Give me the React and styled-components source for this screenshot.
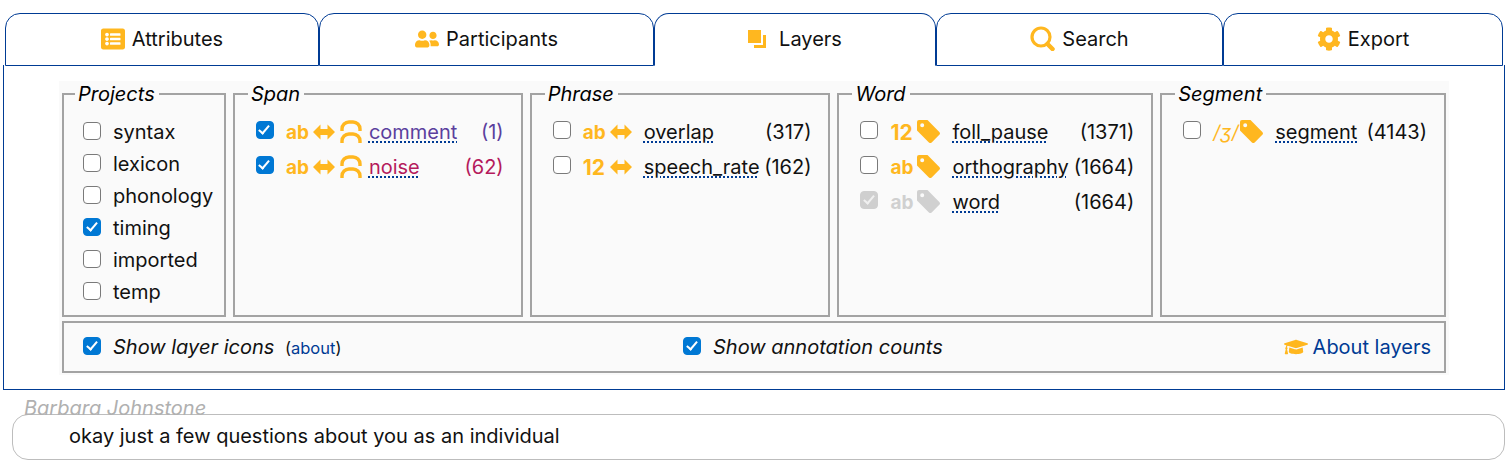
import React from "react";
import styled, { createGlobalStyle } from "styled-components";
import { FaListAlt, FaUserFriends, FaCog, FaTag, FaGraduationCap, FaArrowsAltH } from "react-icons/fa";

const AMBER = "#ffb71f";
const NAVY = "#003b94";

const Global = createGlobalStyle`
  html, body { margin: 0; padding: 0; background: #fff; }
  body { font-family: Inter, "Noto Sans", sans-serif; font-size: 20px; color: #111; }
`;

const Page = styled.div`
  width: 1510px;
  height: 470px;
  padding: 13px 5px 0 3px;
  box-sizing: border-box;
  overflow: hidden;
`;

const TabBar = styled.div`
  display: flex;
  margin-left: 2px;
  height: 53px;
`;

const Tab = styled.div`
  width: ${(p) => p.$w}px;
  box-sizing: border-box;
  border: 1px solid ${NAVY};
  border-bottom-color: ${(p) => (p.$active ? "transparent" : NAVY)};
  border-radius: 15px 15px 0 0;
  display: flex;
  align-items: center;
  justify-content: center;
  gap: 7px;
  padding-bottom: 2px;
  background: #fff;
  svg { color: ${AMBER}; flex: none; }
`;

const Panel = styled.div`
  width: 1502px;
  height: 325px;
  margin-top: -1px;
  box-sizing: border-box;
  border: 1px solid ${NAVY};
  border-top: 0;
  padding: 16px 0 0 55px;
`;

const Inner = styled.div`
  width: 1390px;
  height: 294px;
  box-sizing: border-box;
  background: #fafafa;
  padding: 1px 3px 0;
`;

const Columns = styled.div`
  display: flex;
  gap: 7px;
`;

const Group = styled.fieldset`
  width: ${(p) => p.$w}px;
  height: 235px;
  box-sizing: border-box;
  margin: 0;
  padding: 8px 17px 0 ${(p) => p.$left || 21}px;
  border: 2px solid #a3a3a3;
  min-width: 0;
`;

const Legend = styled.legend`
  font-style: italic;
  color: #000;
  padding: 0 4px 0 3px;
  margin-left: -8px;
  line-height: 24px;
`;

const ProjectRow = styled.label`
  display: flex;
  align-items: center;
  gap: 12px;
  height: 32px;
  position: relative;
  top: 2px;
`;

const Row = styled.div`
  display: flex;
  align-items: center;
  height: 35px;
`;

const Check = styled.input.attrs({ type: "checkbox", readOnly: true })`
  appearance: none;
  flex: none;
  width: 18px;
  height: 18px;
  margin: 0 0 3px;
  box-sizing: border-box;
  border: 1.5px solid #7a7a7a;
  border-radius: 4px;
  background: #fff;
  position: relative;
  &:checked { background: #0078d4; border-color: #0078d4; }
  &:checked::after {
    content: "";
    position: absolute;
    left: 4.5px;
    top: 1px;
    width: 4px;
    height: 9px;
    border: solid #fff;
    border-width: 0 2.5px 2.5px 0;
    transform: rotate(40deg);
  }
  &:disabled { background: #cfcfcf; border-color: #cfcfcf; }
  &:disabled::after { border-color: #f0f0f0; }
`;

const Icons = styled.span`
  display: flex;
  align-items: center;
  gap: 5px;
  margin-left: 12px;
  margin-right: ${(p) => (p.$tight ? 7 : 12)}px;
  color: ${(p) => (p.$off ? "#d0d0d0" : AMBER)};
  svg { flex: none; }
`;

const Glyph = styled.b`
  width: 22px;
  font-size: ${(p) => p.$size || 19}px;
  font-weight: ${(p) => p.$weight || 700};
  font-style: ${(p) => (p.$italic ? "italic" : "normal")};
  line-height: 22px;
  margin-top: 2px;
  white-space: nowrap;
`;

const Name = styled.span`
  color: ${(p) => p.$color || "#111"};
  text-decoration: underline dotted ${NAVY} 2px;
  text-underline-offset: 3px;
  line-height: 24px;
`;

const Count = styled.span`
  margin-left: auto;
  color: ${(p) => p.$color || "#111"};
`;

const Options = styled.fieldset`
  height: 52px;
  box-sizing: border-box;
  margin: 4px 0 0;
  padding: 0 13px 0 19px;
  width: 1384px;
  border: 2px solid #a3a3a3;
  display: grid;
  grid-template-columns: 600px 1fr auto;
  align-items: center;
`;

const Option = styled.label`
  display: flex;
  align-items: center;
  gap: 12px;
  font-style: italic;
`;

const About = styled.span`
  font-style: normal;
  font-size: 16.5px;
  color: ${NAVY};
  margin-left: 6px;
  span { color: #111; }
`;

const AboutLayers = styled.a`
  display: flex;
  align-items: center;
  gap: 5px;
  color: ${NAVY};
  svg { color: ${AMBER}; }
`;

const Speaker = styled.div`
  margin: 6px 0 0 21px;
  color: #b0b0b0;
  font-style: italic;
  line-height: 24px;
  height: 18px;
`;

const Utterance = styled.div`
  margin-left: 9px;
  width: 1493px;
  height: 46px;
  box-sizing: border-box;
  border: 1px solid #bdbdbd;
  border-radius: 16px;
  padding: 7px 0 0 56px;
  line-height: 28px;
  color: #111;
`;

const LayersIcon = () => (
  <svg width="18" height="18" viewBox="0 0 18 18" fill={AMBER}>
    <rect x="0" y="0" width="13" height="13" />
    <path d="M15 5h3v13H6v-3h9z" />
  </svg>
);

const SearchIcon = () => (
  <svg width="25" height="25" viewBox="0 0 25 25" fill="none" stroke={AMBER}>
    <circle cx="11" cy="11" r="9" strokeWidth="3.2" />
    <path d="M17.5 18l5 5" strokeWidth="4.5" strokeLinecap="round" />
  </svg>
);

const ArcsIcon = () => (
  <svg width="22" height="23" viewBox="0 0 22 23" fill="none" stroke={AMBER} strokeWidth="3.4">
    <path d="M2 11V9a7 7 0 0 1 7-7h4a7 7 0 0 1 7 7v2" />
    <path d="M2 23v-2a7 7 0 0 1 7-7h4a7 7 0 0 1 7 7v2" />
  </svg>
);

const TagIcon = () => (
  <svg width="23" height="23" viewBox="0 0 23 23" fill="currentColor">
    <path fillRule="evenodd" d="M2 0h8.5L22.3 12a2 2 0 0 1 0 2.8l-7.6 7.6a2 2 0 0 1-2.8 0L0 10.5V2a2 2 0 0 1 2-2zm3.2 3.2a2 2 0 1 0 0 4 2 2 0 0 0 0-4z" />
  </svg>
);

const ArrowIcon = () => (
  <svg width="22" height="16" viewBox="0 0 22 16" fill="currentColor">
    <path d="M0 8l7.5-7.5V5h7V.5L22 8l-7.5 7.5V11h-7v4.5z" />
  </svg>
);

const projects = [
  ["syntax", false],
  ["lexicon", false],
  ["phonology", false],
  ["timing", true],
  ["imported", false],
  ["temp", false],
];

export default function App() {
  return (
    <Page>
      <Global />
      <TabBar>
        <Tab $w={314}><FaListAlt size={24} /><span>Attributes</span></Tab>
        <Tab $w={335}><FaUserFriends size={24} /><span>Participants</span></Tab>
        <Tab $w={282} $active><LayersIcon /><span style={{ marginLeft: 6 }}>Layers</span></Tab>
        <Tab $w={287}><SearchIcon /><span>Search</span></Tab>
        <Tab $w={280}><FaCog size={24} /><span>Export</span></Tab>
      </TabBar>
      <Panel>
        <Inner>
          <Columns>
            <Group $w={164} $left={19}>
              <Legend>Projects</Legend>
              {projects.map(([p, c]) => (
                <ProjectRow key={p}><Check checked={c} /><span>{p}</span></ProjectRow>
              ))}
            </Group>
            <Group $w={290}>
              <Legend>Span</Legend>
              <Row>
                <Check checked />
                <Icons $tight><Glyph>ab</Glyph><ArrowIcon /><ArcsIcon /></Icons>
                <Name $color="#5b3f9e">comment</Name>
                <Count $color="#5b3f9e">(1)</Count>
              </Row>
              <Row>
                <Check checked />
                <Icons $tight><Glyph>ab</Glyph><ArrowIcon /><ArcsIcon /></Icons>
                <Name $color="#b51a5c">noise</Name>
                <Count $color="#b51a5c">(62)</Count>
              </Row>
            </Group>
            <Group $w={301}>
              <Legend>Phrase</Legend>
              <Row>
                <Check />
                <Icons><Glyph>ab</Glyph><ArrowIcon /></Icons>
                <Name>overlap</Name>
                <Count>(317)</Count>
              </Row>
              <Row>
                <Check />
                <Icons><Glyph $size={21}>12</Glyph><ArrowIcon /></Icons>
                <Name>speech_rate</Name>
                <Count>(162)</Count>
              </Row>
            </Group>
            <Group $w={316}>
              <Legend>Word</Legend>
              <Row>
                <Check />
                <Icons><Glyph $size={21}>12</Glyph><TagIcon /></Icons>
                <Name>foll_pause</Name>
                <Count>(1371)</Count>
              </Row>
              <Row>
                <Check />
                <Icons><Glyph>ab</Glyph><TagIcon /></Icons>
                <Name>orthography</Name>
                <Count>(1664)</Count>
              </Row>
              <Row>
                <Check checked disabled />
                <Icons $off><Glyph>ab</Glyph><TagIcon /></Icons>
                <Name>word</Name>
                <Count>(1664)</Count>
              </Row>
            </Group>
            <Group $w={286}>
              <Legend>Segment</Legend>
              <Row>
                <Check />
                <Icons><Glyph $weight={400} $italic>/ʒ/</Glyph><TagIcon /></Icons>
                <Name>segment</Name>
                <Count>(4143)</Count>
              </Row>
            </Group>
          </Columns>
          <Options>
            <Option>
              <Check checked />
              <span>Show layer icons<About> <span>(</span>about<span>)</span></About></span>
            </Option>
            <Option>
              <Check checked />
              <span>Show annotation counts</span>
            </Option>
            <AboutLayers><FaGraduationCap size={24} />About layers</AboutLayers>
          </Options>
        </Inner>
      </Panel>
      <Speaker>Barbara Johnstone</Speaker>
      <Utterance>okay just a few questions about you as an individual</Utterance>
    </Page>
  );
}
